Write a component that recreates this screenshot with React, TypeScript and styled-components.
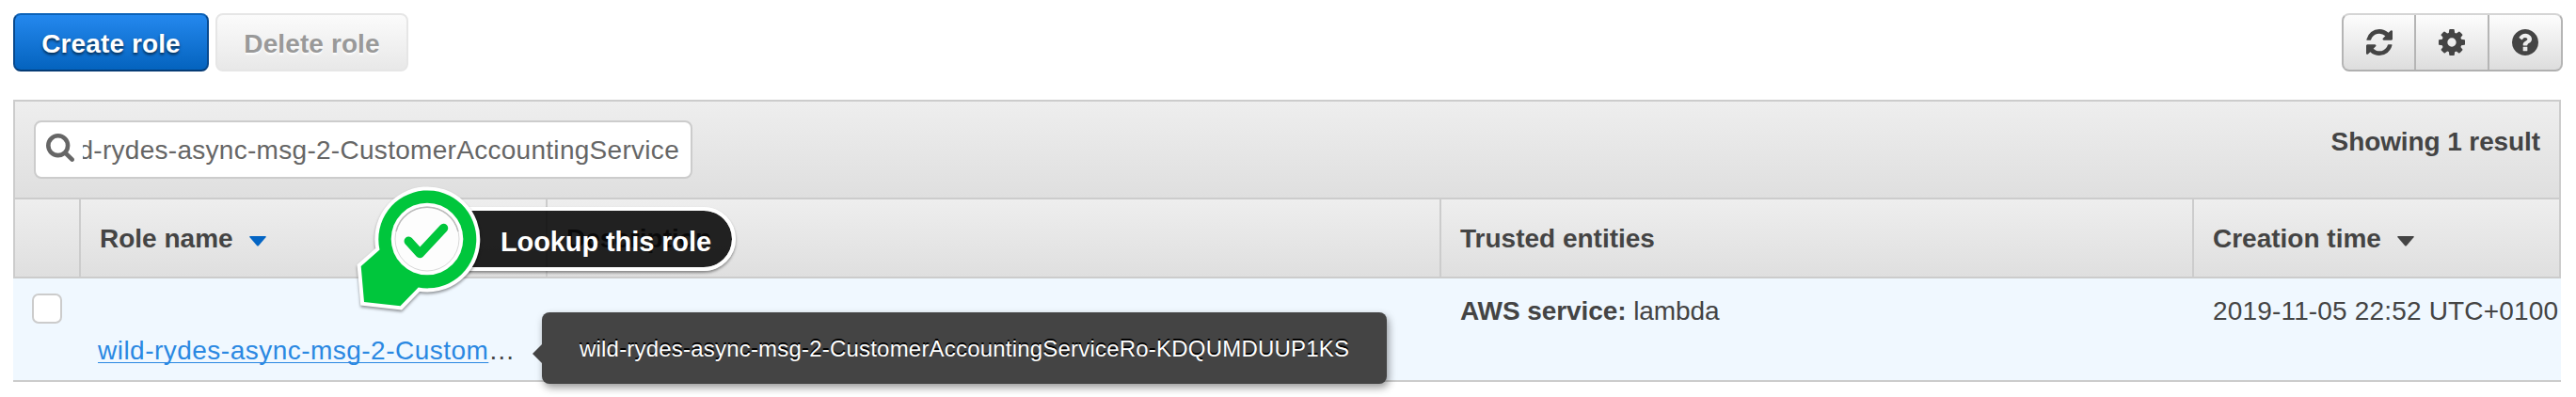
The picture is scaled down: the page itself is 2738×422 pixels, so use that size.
import React from "react";
import styled, { createGlobalStyle } from "styled-components";

const GlobalStyle = createGlobalStyle`
  * { box-sizing: border-box; }
  body {
    margin: 0;
    background: #fff;
    color: #444;
    font-family: "Liberation Sans", Arial, sans-serif;
    font-size: 28px;
    line-height: 32px;
    overflow: hidden;
  }
`;

const Page = styled.main`
  position: relative;
  width: 2738px;
  height: 422px;
  padding: 14px 14px 0;
`;

const Toolbar = styled.header`
  display: flex;
  height: 62px;
  margin-bottom: 30px;
`;

const Button = styled.button<{ $primary?: boolean }>`
  display: flex;
  align-items: center;
  justify-content: center;
  width: ${(p) => (p.$primary ? 208 : 205)}px;
  height: 62px;
  margin: 0 7px 0 0;
  padding: 4px 0 0;
  border: 2px solid;
  border-color: ${(p) => (p.$primary ? "#0c62b8 #08498d #053b75" : "#e6e6e6")};
  border-radius: 8px;
  background: ${(p) =>
    p.$primary
      ? "linear-gradient(#2488ee, #0463be)"
      : "linear-gradient(#fbfbfb, #e8e8e8)"};
  color: ${(p) => (p.$primary ? "#fff" : "#999")};
  font: bold 28px/32px "Liberation Sans", Arial, sans-serif;
  letter-spacing: 0.1px;
  text-shadow: ${(p) =>
    p.$primary ? "0 2px 3px rgba(0, 0, 0, 0.65)" : "0 2px 2px #fff"};
`;

const IconGroup = styled.div`
  display: flex;
  width: 235px;
  height: 62px;
  margin-left: auto;
  border: 2px solid;
  border-color: #d5d5d5 #b5b5b5 #b0b0b0;
  border-radius: 8px;
  background: linear-gradient(#fdfdfd, #dddddd);
`;

const IconButton = styled.button`
  display: flex;
  align-items: center;
  justify-content: center;
  width: 75px;
  margin: 0;
  padding: 0;
  border: 0;
  background: none;
  color: #444;
  & + & {
    width: 78px;
    border-left: 2px solid #b5b5b5;
  }
`;

const Table = styled.section`
  width: 2708px;
`;

const FilterBar = styled.div`
  display: flex;
  justify-content: space-between;
  height: 106px;
  padding: 20px;
  border: 2px solid #ccc;
  background: linear-gradient(#eeeeee, #dfdfdf);
`;

const SearchBox = styled.div`
  display: flex;
  align-items: center;
  width: 700px;
  height: 62px;
  padding: 0 12px 0 11px;
  border: 2px solid #ccc;
  border-radius: 8px;
  background: #fff;
  color: #666;
`;

const SearchIcon = styled.svg`
  flex: none;
  width: 30px;
  height: 30px;
  margin: 0 9px 4px 0;
`;

const SearchValue = styled.div`
  display: flex;
  flex: 1;
  justify-content: flex-end;
  min-width: 0;
  padding-top: 1px;
  overflow: hidden;
  white-space: nowrap;
  letter-spacing: 0.29px;
`;

const ResultCount = styled.div`
  margin-top: 7px;
  font-weight: bold;
  letter-spacing: -0.1px;
`;

const Row = styled.div<{ $lead: number }>`
  display: grid;
  grid-template-columns: ${(p) => p.$lead}px 496px 950px 800px 1fr;
`;

const HeadRow = styled(Row)`
  height: 84px;
  border: solid #ccc;
  border-width: 0 2px 2px;
  background: linear-gradient(#eeeeee, #dfdfdf);
`;

const HeadCell = styled.div`
  display: flex;
  align-items: center;
  padding: 2px 0 0 20px;
  font-weight: bold;
  & + & {
    border-left: 2px solid #ccc;
  }
`;

const Caret = styled.svg`
  width: 18px;
  height: 11px;
  margin: 5px 0 0 17px;
`;

const DataRow = styled(Row)`
  height: 110px;
  border-bottom: 2px solid #ccc;
  background: #f0f8ff;
`;

const Cell = styled.div`
  padding: 19px 0 0 22px;
  white-space: nowrap;
`;

const NameCell = styled(Cell)`
  padding: 61px 0 0 20px;
`;

const EntityCell = styled(Cell)`
  letter-spacing: -0.08px;
`;

const DateCell = styled(Cell)`
  letter-spacing: 0.17px;
`;

const Checkbox = styled.div`
  width: 32px;
  height: 32px;
  margin: 16px 0 0 20px;
  border: 2px solid #ccc;
  border-radius: 7px;
  background: #fff;
`;

const RoleLink = styled.a`
  color: #2a88e2;
  letter-spacing: 0.48px;
  text-decoration: underline;
  text-decoration-thickness: 1px;
  text-underline-offset: 3px;
  text-decoration-skip-ink: none;
`;

const Tooltip = styled.div`
  position: absolute;
  left: 576px;
  top: 332px;
  width: 898px;
  height: 76px;
  padding: 23px 40px;
  border-radius: 8px;
  background: #444;
  box-shadow: 2px 4px 8px rgba(0, 0, 0, 0.4);
  color: #fff;
  font-size: 24px;
  letter-spacing: 0.2px;
  white-space: nowrap;
  text-shadow: 0 -2px 0 #000;
  &::before {
    content: "";
    position: absolute;
    left: -10px;
    top: 34px;
    border: solid transparent;
    border-width: 10px 10px 10px 0;
    border-right-color: #444;
  }
`;

const CalloutLabel = styled.div`
  position: absolute;
  left: 450px;
  top: 220px;
  width: 332px;
  height: 68px;
  padding: 17px 0 0 78px;
  border: 4px solid #fff;
  border-radius: 34px;
  background: rgba(0, 0, 0, 0.86);
  background-clip: padding-box;
  box-shadow: 0 2px 3px rgba(0, 0, 0, 0.4);
  color: #fff;
  font-size: 29px;
  font-weight: bold;
  letter-spacing: -0.1px;
  white-space: nowrap;
`;

const CalloutBadge = styled.svg`
  position: absolute;
  left: 370px;
  top: 190px;
  filter: drop-shadow(0 2px 1.5px rgba(0, 0, 0, 0.4));
`;

const refreshPath =
  "M1511 1056q0 5-1 7-64 268-268 434.5t-478 166.5q-146 0-282.5-55t-243.5-157l-129 129q-19 19-45 19t-45-19-19-45v-448q0-26 19-45t45-19h448q26 0 45 19t19 45-19 45l-137 137q71 66 161 102t187 36q134 0 250-65t186-179q11-17 53-117 8-23 30-23h192q13 0 22.5 9.5t9.5 22.5zm25-800v448q0 26-19 45t-45 19h-448q-26 0-45-19t-19-45 19-45l138-138q-148-137-349-137-134 0-250 65t-186 179q-11 17-53 117-8 23-30 23h-199q-13 0-22.5-9.5t-9.5-22.5v-7q65-268 270-434.5t480-166.5q146 0 284 55.5t245 156.5l130-129q19-19 45-19t45 19 19 45z";
const cogPath =
  "M1024 896q0-106-75-181t-181-75-181 75-75 181 75 181 181 75 181-75 75-181zm512-109v222q0 12-8 23t-20 13l-185 28q-19 54-39 91 35 50 107 138 10 12 10 25t-9 23q-27 37-99 108t-94 71q-12 0-26-9l-138-108q-44 23-91 38-16 136-29 186-7 28-36 28h-222q-14 0-24.5-8.5t-11.5-21.5l-28-184q-49-16-90-37l-141 107q-10 9-25 9-14 0-25-11-126-114-165-168-7-10-7-23 0-12 8-23 15-21 51-66.5t54-70.5q-27-50-41-99l-183-27q-13-2-21-12.5t-8-23.5v-222q0-12 8-23t19-13l186-28q14-46 39-92-40-57-107-138-10-12-10-24 0-10 9-23 26-36 98.5-107.5t94.5-71.5q13 0 26 10l138 107q44-23 91-38 16-136 29-186 7-28 36-28h222q14 0 24.5 8.5t11.5 21.5l28 184q49 16 90 37l142-107q9-9 24-9 13 0 25 10 129 119 165 170 7 8 7 22 0 12-8 23-15 21-51 66.5t-54 70.5q26 50 41 98l183 28q13 2 21 12.5t8 23.5z";
const helpPath =
  "M896 1376v-192q0-14-9-23t-23-9h-192q-14 0-23 9t-9 23v192q0 14 9 23t23 9h192q14 0 23-9t9-23zm256-672q0-88-55.5-163t-138.5-116-170-41q-243 0-371 213-15 24 8 42l132 100q7 6 19 6 16 0 25-12 53-68 86-92 34-24 86-24 48 0 85.5 26t37.5 59q0 38-20 61t-68 45q-63 28-115.5 86.5t-52.5 125.5v36q0 14 9 23t23 9h192q14 0 23-9t9-23q0-19 21.5-49.5t54.5-49.5q32-18 49-28.5t46-35 44.5-48 28-60.5 12.5-81zm384 192q0 209-103 385.5t-279.5 279.5-385.5 103-385.5-103-279.5-279.5-103-385.5 103-385.5 279.5-279.5 385.5-103 385.5 103 279.5 279.5 103 385.5z";
const searchPath =
  "M1152 832q0-185-131.5-316.5t-316.5-131.5-316.5 131.5-131.5 316.5 131.5 316.5 316.5 131.5 316.5-131.5 131.5-316.5zm512 832q0 52-38 90t-90 38q-54 0-90-38l-343-342q-179 124-399 124-143 0-273.5-55.5t-225-150-150-225-55.5-273.5 55.5-273.5 150-225 225-150 273.5-55.5 273.5 55.5 225 150 150 225 55.5 273.5q0 220-124 399l343 343q37 37 37 90z";

const ToolIcon = ({ d }: { d: string }) => (
  <svg width="28" height="28" viewBox="0 128 1536 1536" fill="currentColor">
    <path d={d} />
  </svg>
);

const SortCaret = ({ color }: { color: string }) => (
  <Caret viewBox="0 0 18 11">
    <path d="M1 0h16q1.6 0 .5 1.3L10 10q-1 1-2 0L.5 1.3Q-.6 0 1 0z" fill={color} />
  </Caret>
);

export default function App() {
  return (
    <>
      <GlobalStyle />
      <Page>
        <Toolbar>
          <Button $primary>Create role</Button>
          <Button disabled>Delete role</Button>
          <IconGroup>
            <IconButton aria-label="Refresh"><ToolIcon d={refreshPath} /></IconButton>
            <IconButton aria-label="Settings"><ToolIcon d={cogPath} /></IconButton>
            <IconButton aria-label="Help"><ToolIcon d={helpPath} /></IconButton>
          </IconGroup>
        </Toolbar>
        <Table>
          <FilterBar>
            <SearchBox>
              <SearchIcon viewBox="0 128 1664 1664" fill="currentColor">
                <path d={searchPath} />
              </SearchIcon>
              <SearchValue>
                <span>d-rydes-async-msg-2-CustomerAccountingService</span>
              </SearchValue>
            </SearchBox>
            <ResultCount>Showing 1 result</ResultCount>
          </FilterBar>
          <HeadRow $lead={68}>
            <HeadCell />
            <HeadCell>Role name<SortCaret color="#0465c4" /></HeadCell>
            <HeadCell>Description</HeadCell>
            <HeadCell>Trusted entities</HeadCell>
            <HeadCell>Creation time<SortCaret color="#444" /></HeadCell>
          </HeadRow>
          <DataRow $lead={70}>
            <Checkbox />
            <NameCell>
              <RoleLink>wild-rydes-async-msg-2-Custom</RoleLink>…
            </NameCell>
            <Cell />
            <EntityCell><b>AWS service:</b> lambda</EntityCell>
            <DateCell>2019-11-05 22:52 UTC+0100</DateCell>
          </DataRow>
        </Table>
        <CalloutLabel>Lookup this role</CalloutLabel>
        <CalloutBadge width="150" height="160" viewBox="370 190 150 160">
          <path
            d="M403.500 265.500L383.700 283L387 321L425.500 325.300L444.700 305.500A52 52 0 1 0 403.500 265.500z"
            fill="#00c63c"
            stroke="#fff"
            strokeWidth="8"
            paintOrder="stroke"
          />
          <circle cx="454" cy="254" r="38.300" fill="#fff" />
          <circle cx="454" cy="254" r="34" fill="#fdfdfd" stroke="#d8d8d8" strokeWidth="1" />
          <path d="M421 246A34 34 0 0 1 487 246" fill="none" stroke="#bbb" strokeWidth="1.500" />
          <path
            d="M434.300 256.300L446.300 269.500L471.500 242.500"
            fill="none"
            stroke="#00c63c"
            strokeWidth="9.500"
            strokeLinecap="round"
            strokeLinejoin="round"
          />
        </CalloutBadge>
        <Tooltip>wild-rydes-async-msg-2-CustomerAccountingServiceRo-KDQUMDUUP1KS</Tooltip>
      </Page>
    </>
  );
}
